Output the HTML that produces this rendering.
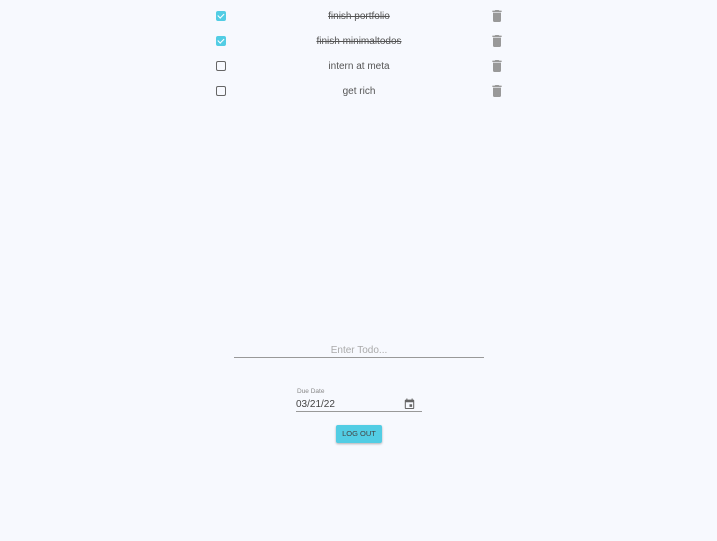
<!DOCTYPE html>
<html><head><style>
body{margin:0;width:717px;height:541px;background:#f7f9fe;font-family:"Liberation Sans",sans-serif;position:relative;overflow:hidden}
.row{position:absolute;left:0;width:717px;height:20px}
.cb{position:absolute;left:216px;width:10px;height:10px;border:1.5px solid #666;border-radius:2px;box-sizing:border-box}
.cb.on{background:#52cde4;border-color:#52cde4}
.cb.on:after{content:"";position:absolute;left:2.3px;top:0px;width:2.5px;height:5px;border:solid #fff;border-width:0 1.2px 1.2px 0;transform:rotate(45deg)}
.t{position:absolute;left:259px;width:200px;text-align:center;font-size:10px;color:#555}
.s{text-decoration:line-through}
.tr{position:absolute;left:492px}
.a{position:absolute}
</style></head><body>
<div class="row" style="top:0">
<div class="cb on" style="top:11px"></div><div class="t s" style="top:11px">finish portfolio</div>
<svg class="tr" style="top:10px" width="10" height="12" viewBox="5 3 14 18"><path fill="#999" d="M6 19c0 1.1.9 2 2 2h8c1.1 0 2-.9 2-2V7H6v12zM19 4h-3.5l-1-1h-5l-1 1H5v2h14V4z"/></svg></div>
<div class="row" style="top:25px">
<div class="cb on" style="top:11px"></div><div class="t s" style="top:11px">finish minimaltodos</div>
<svg class="tr" style="top:10px" width="10" height="12" viewBox="5 3 14 18"><path fill="#999" d="M6 19c0 1.1.9 2 2 2h8c1.1 0 2-.9 2-2V7H6v12zM19 4h-3.5l-1-1h-5l-1 1H5v2h14V4z"/></svg></div>
<div class="row" style="top:50px">
<div class="cb" style="top:11px"></div><div class="t" style="top:11px">intern at meta</div>
<svg class="tr" style="top:10px" width="10" height="12" viewBox="5 3 14 18"><path fill="#999" d="M6 19c0 1.1.9 2 2 2h8c1.1 0 2-.9 2-2V7H6v12zM19 4h-3.5l-1-1h-5l-1 1H5v2h14V4z"/></svg></div>
<div class="row" style="top:75px">
<div class="cb" style="top:11px"></div><div class="t" style="top:11px">get rich</div>
<svg class="tr" style="top:10px" width="10" height="12" viewBox="5 3 14 18"><path fill="#999" d="M6 19c0 1.1.9 2 2 2h8c1.1 0 2-.9 2-2V7H6v12zM19 4h-3.5l-1-1h-5l-1 1H5v2h14V4z"/></svg></div>

<div class="a" style="left:234px;top:345px;width:250px;text-align:center;font-size:10px;color:#aaa">Enter Todo...</div>
<div class="a" style="left:234px;top:357px;width:250px;height:1px;background:#999"></div>

<div class="a" style="left:297px;top:388px;font-size:6.5px;color:#888">Due Date</div>
<div class="a" style="left:296px;top:399px;font-size:10px;color:#444">03/21/22</div>
<svg class="a" style="left:404px;top:398px" width="11" height="11" viewBox="3 1 18 21"><path fill="#666" d="M19 4h-1V2h-2v2H8V2H6v2H5c-1.1 0-2 .9-2 2v14c0 1.1.9 2 2 2h14c1.1 0 2-.9 2-2V6c0-1.1-.9-2-2-2zm0 16H5V9h14v11zM12 13h5v5h-5z"/></svg>
<div class="a" style="left:296px;top:411px;width:126px;height:1px;background:#999"></div>

<div class="a" style="left:336px;top:425px;width:46px;height:18px;background:#52cde4;border-radius:2px;box-shadow:0 1px 2px rgba(0,0,0,.3);font-size:7.5px;color:#444;text-align:center;line-height:18px">LOG OUT</div>
</body></html>
